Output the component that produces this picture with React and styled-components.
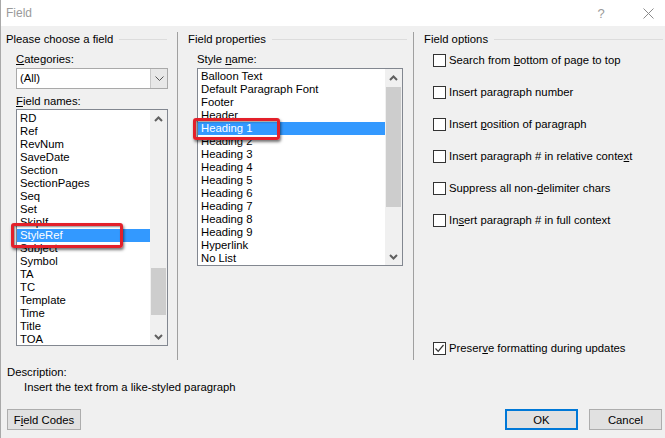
import React from 'react';
import styled, { createGlobalStyle } from 'styled-components';

const GlobalStyle = createGlobalStyle`
  html, body {
    margin: 0;
    padding: 0;
    background: #f0f0f0;
  }
  body {
    font-family: "Liberation Sans", Arial, sans-serif;
    font-size: 11.3px;
    color: #000;
  }
  * { box-sizing: border-box; }
  u { text-underline-offset: 1px; }
`;

const Window = styled.div`
  width: 665px;
  height: 438px;
  border-left: 1px solid #a9a9a9;
  background: #f0f0f0;
  display: flex;
  flex-direction: column;
  overflow: hidden;
`;

const TitleBar = styled.div`
  height: 26px;
  background: #fff;
  display: flex;
  align-items: center;
  padding-left: 5px;
  color: #9a9a9a;
  font-size: 12px;
`;

const TitleText = styled.span`
  flex: 1;
`;

const TitleBtn = styled.span`
  width: ${(p) => p.w}px;
  margin-right: ${(p) => p.mr || 0}px;
  display: flex;
  align-items: center;
  justify-content: center;
  color: #9a9a9a;
  font-size: 13px;
`;

const Main = styled.div`
  margin-top: 6px;
  height: 328px;
  display: grid;
  grid-template-columns: 177px 236px 1fr;
`;

const Column = styled.div`
  display: flex;
  flex-direction: column;
  border-right: ${(p) => (p.last ? 'none' : '1px solid #a0a0a0')};
  padding-left: ${(p) => p.pad}px;
`;

const GroupTitle = styled.div`
  height: 14px;
  display: flex;
  align-items: center;
  margin-left: ${(p) => p.inset}px;
  &::after {
    content: '';
    flex: 1;
    height: 1px;
    background: #dcdcdc;
    margin: 0 ${(p) => p.lineEnd}px 0 6px;
  }
`;

const Label = styled.div`
  height: 14px;
  line-height: 14px;
  margin-top: ${(p) => p.mt}px;
`;

const Combo = styled.div`
  margin-top: 2px;
  width: 152px;
  height: 21px;
  border: 1px solid #a9a9a9;
  background: #fff;
  display: flex;
`;

const ComboValue = styled.div`
  flex: 1;
  padding-left: 3px;
  line-height: 19px;
`;

const ComboButton = styled.div`
  width: 17px;
  background: #e8e8e8;
  border-left: 1px solid #c8c8c8;
  display: flex;
  align-items: center;
  justify-content: center;
`;

const ListBox = styled.div`
  position: relative;
  margin-top: ${(p) => p.mt}px;
  width: ${(p) => p.w}px;
  height: ${(p) => p.h}px;
  border: 1px solid #828790;
  background: #fff;
  display: flex;
`;

const Items = styled.div`
  flex: 1;
  overflow: hidden;
  padding-top: ${(p) => p.pt}px;
`;

const Item = styled.div`
  height: 13px;
  line-height: 13px;
  padding-left: 3px;
  white-space: nowrap;
  background: ${(p) => (p.selected ? '#3399ff' : 'transparent')};
  color: ${(p) => (p.selected ? '#fff' : '#000')};
`;

const ScrollBar = styled.div`
  width: 17px;
  background: #f0f0f0;
  display: flex;
  flex-direction: column;
`;

const ScrollArrow = styled.div`
  height: 17px;
  display: flex;
  align-items: center;
  justify-content: center;
`;

const Track = styled.div`
  flex: 1;
  padding: 0 1px;
`;

const Thumb = styled.div`
  margin-top: ${(p) => p.top}px;
  height: ${(p) => p.h}px;
  background: #cdcdcd;
`;

const Callout = styled.div`
  position: absolute;
  left: ${(p) => p.x}px;
  top: ${(p) => p.y}px;
  width: ${(p) => p.w}px;
  height: ${(p) => p.h}px;
  border: 3px solid #e3202a;
  border-radius: 3px;
  box-shadow: 1px 2px 3px rgba(0, 0, 0, 0.55), inset 1px 1px 2px rgba(0, 0, 0, 0.45);
  pointer-events: none;
`;

const Options = styled.div`
  display: flex;
  flex-direction: column;
  gap: 18px;
  margin-top: 7px;
`;

const CheckRow = styled.label`
  height: 14px;
  display: flex;
  align-items: center;
  gap: 3px;
  white-space: nowrap;
`;

const Box = styled.span`
  width: 13px;
  height: 13px;
  border: 1px solid #333;
  background: #fff;
  display: flex;
  align-items: center;
  justify-content: center;
`;

const Preserve = styled.div`
  margin-top: auto;
  padding-bottom: 5px;
`;

const Bottom = styled.div`
  display: flex;
  flex-direction: column;
  padding: 5px 3px 8px 6px;
`;

const DescLabel = styled.div`
  height: 14px;
  line-height: 14px;
`;

const DescText = styled.div`
  height: 14px;
  line-height: 14px;
  margin-top: 1px;
  padding-left: 17px;
`;

const Footer = styled.div`
  margin-top: 15px;
  display: flex;
  align-items: center;
  gap: 11px;
`;

const Spacer = styled.div`
  flex: 1;
`;

const Button = styled.div`
  width: ${(p) => p.w}px;
  height: 21px;
  background: #e1e1e1;
  border: ${(p) => (p.primary ? '2px solid #0078d7' : '1px solid #adadad')};
  display: flex;
  align-items: center;
  justify-content: center;
`;

const UpArrow = () => (
  <svg width="9" height="6" viewBox="0 0 9 6">
    <polyline points="1,5 4.5,1.5 8,5" fill="none" stroke="#606060" strokeWidth="2" />
  </svg>
);

const DownArrow = () => (
  <svg width="9" height="6" viewBox="0 0 9 6">
    <polyline points="1,1 4.5,4.5 8,1" fill="none" stroke="#606060" strokeWidth="2" />
  </svg>
);

const fieldNames = [
  'RD', 'Ref', 'RevNum', 'SaveDate', 'Section', 'SectionPages', 'Seq', 'Set', 'SkipIf',
  'StyleRef', 'Subject', 'Symbol', 'TA', 'TC', 'Template', 'Time', 'Title', 'TOA',
];

const styleNames = [
  'Balloon Text', 'Default Paragraph Font', 'Footer', 'Header', 'Heading 1', 'Heading 2',
  'Heading 3', 'Heading 4', 'Heading 5', 'Heading 6', 'Heading 7', 'Heading 8', 'Heading 9',
  'Hyperlink', 'No List',
];

const options = [
  <>Search from <u>b</u>ottom of page to top</>,
  <>Insert para<u>g</u>raph number</>,
  <>Insert <u>p</u>osition of paragraph</>,
  <>Insert paragraph # in relative conte<u>x</u>t</>,
  <>Suppress all non-<u>d</u>elimiter chars</>,
  <>In<u>s</u>ert paragraph # in full context</>,
];

function Check({ checked, children }) {
  return (
    <CheckRow>
      <Box>
        {checked && (
          <svg width="11" height="11" viewBox="0 0 11 11">
            <polyline points="1.5,5.5 4.2,8.3 9.5,2" fill="none" stroke="#333" strokeWidth="1.2" />
          </svg>
        )}
      </Box>
      <span>{children}</span>
    </CheckRow>
  );
}

function List({ items, selected, w, h, mt, pt, thumbTop, thumbH, callout }) {
  return (
    <ListBox w={w} h={h} mt={mt}>
      <Items pt={pt}>
        {items.map((it) => (
          <Item key={it} selected={it === selected}>{it}</Item>
        ))}
      </Items>
      <ScrollBar>
        <ScrollArrow><UpArrow /></ScrollArrow>
        <Track><Thumb top={thumbTop} h={thumbH} /></Track>
        <ScrollArrow><DownArrow /></ScrollArrow>
      </ScrollBar>
      <Callout {...callout} />
    </ListBox>
  );
}

export default function App() {
  return (
    <>
      <GlobalStyle />
      <Window>
        <TitleBar>
          <TitleText>Field</TitleText>
          <TitleBtn w={16} mr={22}>?</TitleBtn>
          <TitleBtn w={34}>
            <svg width="11" height="11" viewBox="0 0 11 11">
              <path d="M0.5 0.5 L10.5 10.5 M10.5 0.5 L0.5 10.5" stroke="#8a8a8a" strokeWidth="1" />
            </svg>
          </TitleBtn>
        </TitleBar>

        <Main>
          <Column pad={15}>
            <GroupTitle inset={-10} lineEnd={10}>Please choose a field</GroupTitle>
            <Label mt={6}><u>C</u>ategories:</Label>
            <Combo>
              <ComboValue>(All)</ComboValue>
              <ComboButton>
                <svg width="9" height="5" viewBox="0 0 9 5">
                  <polyline points="0.5,0.5 4.5,4.5 8.5,0.5" fill="none" stroke="#555" strokeWidth="1" />
                </svg>
              </ComboButton>
            </Combo>
            <Label mt={5}><u>F</u>ield names:</Label>
            <List
              items={fieldNames}
              selected="StyleRef"
              w={152}
              h={237}
              mt={1}
              pt={2}
              thumbTop={141}
              thumbH={47}
              callout={{ x: -6, y: 113, w: 112, h: 25 }}
            />
          </Column>

          <Column pad={19}>
            <GroupTitle inset={-9} lineEnd={6}>Field properties</GroupTitle>
            <Label mt={6}>Style <u>n</u>ame:</Label>
            <List
              items={styleNames}
              selected="Heading 1"
              w={206}
              h={198}
              mt={2}
              pt={1}
              thumbTop={1}
              thumbH={120}
              callout={{ x: -5, y: 49, w: 87, h: 22 }}
            />
          </Column>

          <Column pad={19} last>
            <GroupTitle inset={-9} lineEnd={2}>Field options</GroupTitle>
            <Options>
              {options.map((o, i) => (
                <Check key={i}>{o}</Check>
              ))}
            </Options>
            <Preserve>
              <Check checked>Preser<u>v</u>e formatting during updates</Check>
            </Preserve>
          </Column>
        </Main>

        <Bottom>
          <DescLabel>Description:</DescLabel>
          <DescText>Insert the text from a like-styled paragraph</DescText>
          <Footer>
            <Button w={74}>F<u>i</u>eld Codes</Button>
            <Spacer />
            <Button w={73} primary>OK</Button>
            <Button w={73}>Cancel</Button>
          </Footer>
        </Bottom>
      </Window>
    </>
  );
}
